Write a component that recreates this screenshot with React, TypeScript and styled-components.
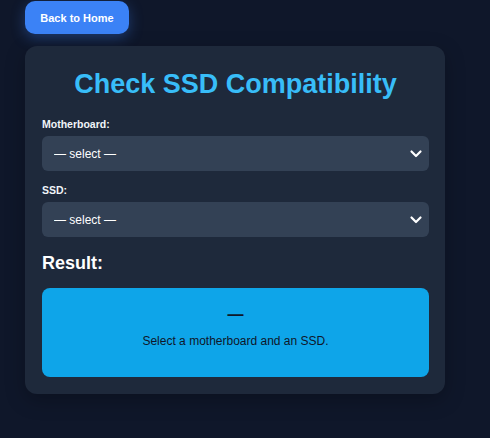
import React, { useState } from "react";
import styled, { createGlobalStyle } from "styled-components";

const Global = createGlobalStyle`
  html, body { margin: 0; padding: 0; background: #0f172a; }
  body { font-family: "Liberation Sans", Arial, sans-serif; color: #e2e8f0; }
`;

const Page = styled.div`
  min-height: 438px;
  padding: 1px 45px 0 25px;
  box-sizing: border-box;
  display: flex;
  flex-direction: column;
  align-items: flex-start;
  gap: 12px;
`;

const HomeButton = styled.button`
  height: 33px;
  width: 104px;
  border: none;
  border-radius: 10px;
  background: #3b82f6;
  color: #ffffff;
  font-family: "Liberation Sans", Arial, sans-serif;
  font-weight: 700;
  font-size: 11px;
  cursor: pointer;
  box-shadow: 0 4px 14px rgba(59, 130, 246, 0.35);
`;

const Card = styled.div`
  width: 420px;
  box-sizing: border-box;
  background: #1e293b;
  border-radius: 12px;
  padding: 21px 16px 17px 17px;
  display: flex;
  flex-direction: column;
  box-shadow: 0 6px 20px rgba(0, 0, 0, 0.25);
`;

const Title = styled.h1`
  margin: 0 0 17px;
  text-align: center;
  color: #38bdf8;
  font-size: 27px;
  font-weight: 700;
  line-height: 34px;
`;

const Label = styled.label`
  font-size: 10.5px;
  font-weight: 700;
  color: #f1f5f9;
  line-height: 12px;
  margin-bottom: 6px;
`;

const SelectWrap = styled.div`
  position: relative;
  margin-bottom: 13px;
`;

const Select = styled.select`
  width: 100%;
  height: 35px;
  appearance: none;
  -webkit-appearance: none;
  border: none;
  border-radius: 6px;
  background: #334155;
  color: #ffffff;
  font-family: "Liberation Sans", Arial, sans-serif;
  font-size: 12px;
  padding: 0 30px 0 12px;
  outline: none;
`;

const Chevron = styled.svg`
  position: absolute;
  right: 6px;
  top: 13px;
  pointer-events: none;
`;

const ResultTitle = styled.h2`
  margin: 2px 0 14px;
  font-size: 18px;
  font-weight: 700;
  color: #ffffff;
  line-height: 22px;
`;

const ResultBox = styled.div`
  background: #0ea5e9;
  border-radius: 8px;
  height: 89px;
  display: flex;
  flex-direction: column;
  align-items: center;
  color: #0f172a;
`;

const Dash = styled.div`
  margin-top: 17px;
  font-size: 16px;
  font-weight: 700;
  line-height: 20px;
`;

const Message = styled.div`
  margin-top: 9px;
  font-size: 12px;
  line-height: 14px;
`;

function ChevronIcon() {
  return (
    <Chevron width="14" height="10" viewBox="0 0 14 10">
      <path d="M2.5 2.5 L7 7 L11.5 2.5" fill="none" stroke="#ffffff" strokeWidth="2.2" strokeLinecap="round" strokeLinejoin="round" />
    </Chevron>
  );
}

export default function App() {
  const [mb, setMb] = useState("");
  const [ssd, setSsd] = useState("");
  return (
    <>
      <Global />
      <Page>
        <HomeButton>Back to Home</HomeButton>
        <Card>
          <Title>Check SSD Compatibility</Title>
          <Label htmlFor="mb">Motherboard:</Label>
          <SelectWrap>
            <Select id="mb" value={mb} onChange={(e) => setMb(e.target.value)}>
              <option value="">— select —</option>
            </Select>
            <ChevronIcon />
          </SelectWrap>
          <Label htmlFor="ssd">SSD:</Label>
          <SelectWrap>
            <Select id="ssd" value={ssd} onChange={(e) => setSsd(e.target.value)}>
              <option value="">— select —</option>
            </Select>
            <ChevronIcon />
          </SelectWrap>
          <ResultTitle>Result:</ResultTitle>
          <ResultBox>
            <Dash>—</Dash>
            <Message>Select a motherboard and an SSD.</Message>
          </ResultBox>
        </Card>
      </Page>
    </>
  );
}
